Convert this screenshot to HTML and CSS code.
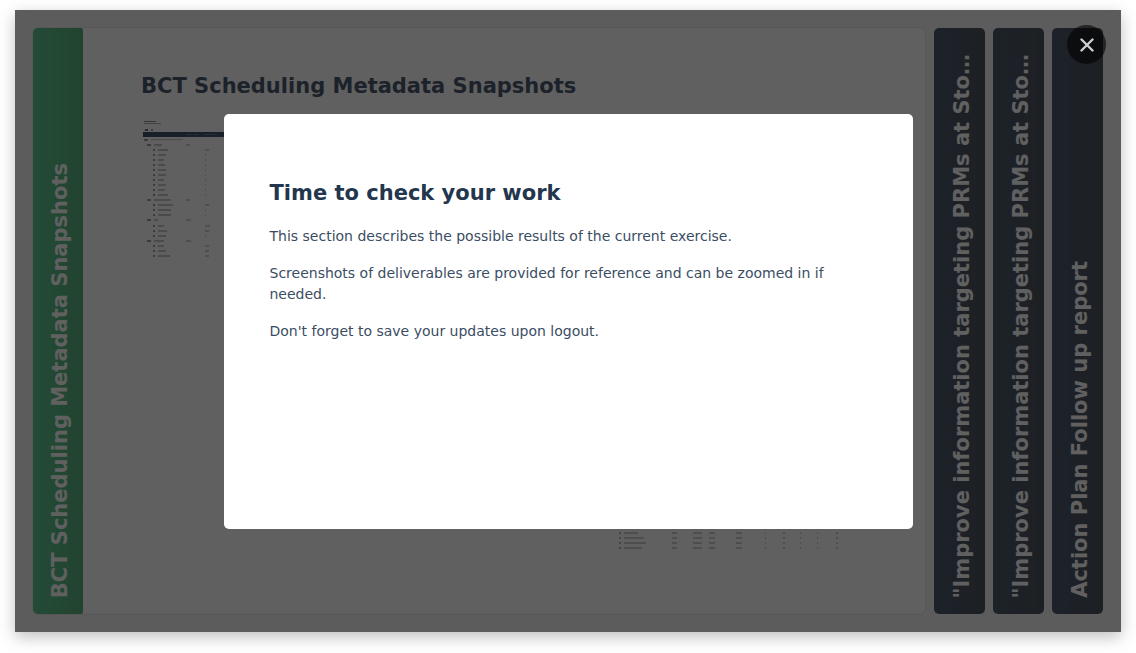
FILE: index.html
```html
<!DOCTYPE html>
<html lang="en">
<head>
<meta charset="utf-8">
<title>Time to check your work</title>
<link rel="stylesheet" href="styles.css">
</head>
<body>
<main class="stage">
  <div class="accordion">
    <section class="panel">
      <button class="tab tab-active" type="button"><span class="tab-label">BCT Scheduling Metadata Snapshots</span></button>
      <div class="panel-body">
        <h2 class="title">BCT Scheduling Metadata Snapshots</h2>
        <svg class="snapshots" viewBox="0 0 700 440" role="img" aria-label="Scheduling metadata tables">
          <g id="snapshots"></g>
        </svg>
      </div>
    </section>
    <button class="tab" type="button"><span class="tab-label">"Improve information targeting PRMs at Sto…</span></button>
    <button class="tab" type="button"><span class="tab-label">"Improve information targeting PRMs at Sto…</span></button>
    <button class="tab" type="button"><span class="tab-label">Action Plan Follow up report</span></button>
  </div>
  <div class="overlay">
    <article class="dialog" role="dialog" aria-labelledby="dialog-title">
      <h2 class="title" id="dialog-title">Time to check your work</h2>
      <p>This section describes the possible results of the current exercise.</p>
      <p>Screenshots of deliverables are provided for reference and can be zoomed in if needed.</p>
      <p>Don't forget to save your updates upon logout.</p>
    </article>
    <button class="close" type="button" aria-label="Close">
      <svg viewBox="0 0 14 14" width="14" height="14"><path d="M1.5 1.5 12.5 12.5M12.5 1.5 1.5 12.5" fill="none" stroke="currentColor" stroke-width="2.4" stroke-linecap="round"/></svg>
    </button>
  </div>
</main>
<script src="script.js"></script>
</body>
</html>
```
FILE: styles.css
```css
* { box-sizing: border-box; }
body {
  margin: 0;
  padding: 10px 15px 21px;
  background: #fff;
  color: #22364d;
  font-family: Verdana, "DejaVu Sans", sans-serif;
}
.stage {
  position: relative;
  display: flex;
  min-height: calc(100vh - 31px);
  padding: 18px;
  background: #f5f5f5;
  box-shadow: 0 5px 15px rgba(0, 0, 0, 0.25);
}
.accordion { display: flex; flex: 1; gap: 8px; }
.panel {
  display: flex;
  flex: 1;
  min-width: 0;
  margin-right: 1px;
  border-radius: 5px;
  background: #fff;
  box-shadow: 0 0 2px rgba(0, 0, 0, 0.2);
}
.panel-body { flex: 1; min-width: 0; padding: 45px 58px 0; }
.title { margin: 0; font-size: 21px; line-height: 26px; font-weight: 700; }
.panel-body .title { color: #4d5b70; }
.snapshots { display: block; width: 700px; max-width: 100%; margin: 19px 0 0 2px; }
.tab {
  display: flex;
  justify-content: center;
  align-items: flex-end;
  width: 51px;
  padding: 16px 0 16px 4px;
  border: 0;
  border-radius: 5px;
  background: linear-gradient(90deg, #4d5b70, #4d555d);
  color: #fff;
  font: 700 21px/28px Verdana, "DejaVu Sans", sans-serif;
}
.tab-active {
  width: 50px;
  border-radius: 5px 2px 2px 5px;
  background: linear-gradient(90deg, #5fc68f, #59b380);
}
.tab-label {
  height: max-content;
  writing-mode: vertical-rl;
  transform: rotate(180deg);
  text-align: left;
  white-space: nowrap;
}
.overlay {
  position: absolute;
  inset: 0;
  display: grid;
  place-items: center;
  background: rgba(0, 0, 0, 0.625);
}
.dialog {
  width: 689px;
  max-width: 90%;
  min-height: 415px;
  padding: 66px 46px;
  border-radius: 5px;
  background: #fff;
}
.dialog p { margin: 16px 0 0; color: #3b4d63; font-size: 14px; line-height: 21px; }
.dialog .title { margin-bottom: 20px; }
.dialog .title + p { margin-top: 0; }
.close {
  position: absolute;
  top: 15px;
  right: 15px;
  display: grid;
  place-items: center;
  width: 39px;
  height: 39px;
  padding: 0;
  border: 0;
  border-radius: 50%;
  background: rgba(0, 0, 0, 0.6);
  color: #d0d0d0;
}
```
FILE: script.js
```
const host = document.getElementById("snapshots");
function bar(x, y, w, h, fill, opacity) {
  const r = document.createElementNS("http://www.w3.org/2000/svg", "rect");
  Object.entries({ x, y, width: w, height: h, fill, opacity }).forEach(([k, v]) => r.setAttribute(k, v));
  host.appendChild(r);
}
bar(1, 3, 12, 1, "#222", 0.5);
bar(1, 5, 17, 1, "#222", 0.35);
bar(2, 11, 3, 2, "#111", 0.6);
bar(8, 11, 2, 2, "#111", 0.4);
bar(0, 14, 300, 5, "#42526a", 1);
[43, 50, 61, 68].forEach((x) => bar(x, 16, 6, 1, "#fff", 0.25));
bar(1, 21, 4, 2, "#111", 0.4);
bar(8, 21, 32, 1, "#222", 0.25);
/* level, y, label width, value x, value width */
const rows = [
  [1, 26, 8, 43, 4], [2, 31, 10, 62, 4], [2, 36, 8, 62, 1], [2, 41, 6, 62, 1],
  [2, 46, 7, 62, 1], [2, 51, 8, 62, 1], [2, 56, 8, 62, 1], [2, 61, 6, 62, 1],
  [2, 66, 8, 62, 1], [2, 71, 7, 62, 1], [2, 76, 10, 62, 1], [1, 81, 17, 43, 4],
  [2, 86, 15, 62, 4], [2, 91, 13, 62, 1], [2, 96, 13, 62, 1], [1, 101, 4, 43, 5],
  [2, 107, 6, 62, 5], [2, 112, 9, 62, 4], [2, 117, 8, 62, 1], [1, 122, 10, 43, 5],
  [2, 127, 6, 62, 4], [2, 132, 8, 62, 4], [2, 137, 12, 62, 4]
];
rows.forEach(([level, y, w, vx, vw]) => {
  const x = level === 1 ? 4 : 10;
  bar(x, y, level === 1 ? 4 : 2, 2, "#111", 0.4);
  bar(x + (level === 1 ? 7 : 5), y, w, 2, "#222", 0.25);
  bar(vx, y, vw, 2, "#222", 0.2);
});
[[414, 14], [419, 20], [424, 22], [429, 18]].forEach(([y, w]) => {
  bar(476, y, 2, 2, "#111", 0.3);
  bar(481, y, w, 2, "#222", 0.22);
  [[529, 5], [550, 9], [566, 6], [593, 6], [622, 1], [640, 2], [657, 1], [674, 1], [693, 2]]
    .forEach(([x, vw]) => bar(x, y, vw, 2, "#222", 0.22));
});
```
